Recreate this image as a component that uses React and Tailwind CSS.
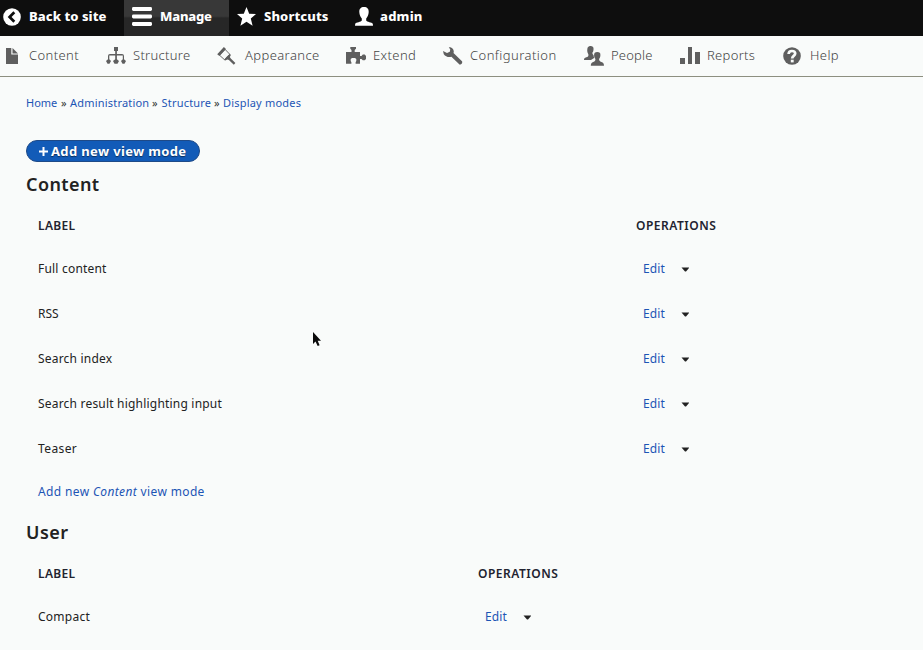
import React from "react";

function BackIcon() {
  return (
    <svg width="18" height="18" viewBox="0 0 18 18" className="block">
      <circle cx="9" cy="9" r="8.8" fill="#fff" />
      <path d="M11.3 4.300 6.600 9l4.700 4.700" fill="none" stroke="#0e0e0e" strokeWidth="2.700" />
    </svg>
  );
}
function MenuIcon() {
  return (
    <svg width="20" height="19" viewBox="0 0 20 19" className="block" fill="#fff">
      <rect width="20" height="4" rx="1.4" />
      <rect y="7.500" width="20" height="4" rx="1.4" />
      <rect y="15" width="20" height="4" rx="1.4" />
    </svg>
  );
}
function StarIcon() {
  return (
    <svg width="19" height="19" viewBox="0 0 19 19" className="block" fill="#fff">
      <path d="m9.5 0 2.7 6.7 6.8.4-5.2 4.5 1.8 7.1-6.1-4-6.1 4 1.8-7.1L0 7.1l6.8-.4z" />
    </svg>
  );
}
function UserIcon() {
  return (
    <svg width="18" height="19" viewBox="0 0 18 19" className="block" fill="#fff">
      <path d="M9 0c3.200 0 4.900 2 4.700 5.100-.1 2.800-1.200 5-2.500 6.300v2.100c.6 1.500 5.800 1.800 6.600 3.300l.2 1.900H0l.2-1.900c.8-1.500 6-1.800 6.600-3.300v-2.100C5.500 10.100 4.400 7.900 4.300 5.100 4.100 2 5.800 0 9 0z" />
    </svg>
  );
}
function FileIcon() {
  return (
    <svg width="12" height="16" viewBox="0 0 12 16" className="block" fill="#5f5f5f">
      <path d="M0 0h5.300v6.600H12V16H0z" />
      <path d="M6.500 0 12 5.400H6.500z" />
    </svg>
  );
}
function StructureIcon() {
  return (
    <svg width="20" height="17" viewBox="0 0 20 17" className="block" fill="#5f5f5f">
      <path d="M8 0h4v4h-1.100v3H16q2 0 2 2v3.300l2 1.700-1.500 2.800h-2L15 14l1.800-1.700V8.500h-5.900v3.800L13 14l-1.500 2.800h-3L7 14l2.200-1.700V8.500H3.300v3.800L5 14l-1.500 2.800h-2L0 14l2-1.700V9q0-2 2-2h5.200V4H8z" />
    </svg>
  );
}
function AppearanceIcon() {
  return (
    <svg width="19" height="18" viewBox="0 0 19 18" className="block">
      <path d="M8 2.300 12.800 7.300 7.600 12.800 2.500 8.200z" fill="none" stroke="#5f5f5f" strokeWidth=".9" />
      <path d="M6.900 0 9 2 2.500 9 .2 7.200zM12.900 6.800l.9 1.400-1 1.800 1 1.500 4.600 4.600-1.600 1.700-4.900-4.800-1.600-.4-2 .8-1.200-.7 2.600-3z" fill="#5f5f5f" />
    </svg>
  );
}
function ExtendIcon() {
  return (
    <svg width="20" height="17" viewBox="0 0 20 17" className="block" fill="#5f5f5f">
      <path d="M4.300 0h5.700v1.700L8.700 3v2H14v4h1.500l1.300-1.500h1.900L20 9v3l-1.300 1.300h-1.900L15.500 12H14v4.800H9.600v-1.500l.7-1.300v-2L9 11H6l-1.300 1v2l.7 1.300v1.500H0V5h5.500V3L4.300 1.700z" />
    </svg>
  );
}
function WrenchIcon() {
  return (
    <svg width="20" height="18" viewBox="0 0 20 18" className="block" fill="#5f5f5f">
      <path d="M5.800.2c2.800-.2 5.100 1.800 5 4.600l-.3 1.300 8.500 8.200c.9 1.500-.8 3.600-2.500 3.300l-8.100-7.900c-2.800 1-5.900-.1-7.600-2.500L0 4l4 2 2.800-1.200.5-2.300z" />
    </svg>
  );
}
function PeopleIcon() {
  return (
    <svg width="20" height="20" viewBox="0 0 20 20" className="block">
      <path d="M5.200.3C8-.5 9.900.8 9.500 3.500 9.400 5 9 6 8.300 6.800c.2 1.300.9 2.300 1.800 2.700v2.600L7 14.100H0c0-2 .5-2.200 2.300-2.900 1.700-.6 2.200-.8 2.100-2.700C3.800 7 3 6 3.300 3.500 3.400 1.700 4 .7 5.200.3z" fill="#5f5f5f" />
      <path d="M13.200 6c2.400 0 3.400 1.200 3.200 3.200-.1 1.800-.6 3-1.300 3.800 0 1.600.5 2.300 2.300 2.900 1.900.6 2.500 1.300 2.600 3.800H6.800c.1-2.500.7-3.200 2.400-3.800 1.900-.6 2.200-1.300 2.200-2.900-.8-.8-1.200-2-1.300-3.800C10 7.200 11.100 6 13.200 6z" fill="#5f5f5f" stroke="#f9fbfa" strokeWidth="1" paintOrder="stroke" />
    </svg>
  );
}
function ReportsIcon() {
  return (
    <svg width="20" height="17" viewBox="0 0 20 17" className="block" fill="#5f5f5f">
      <path d="M0 11h5v6H0zM8 0h4v17H8zM15 5h5v12h-5z" />
    </svg>
  );
}
function HelpIcon() {
  return (
    <svg width="18" height="18" viewBox="0 0 18 18" className="block">
      <circle cx="9" cy="9" r="8.800" fill="#5f5f5f" />
      <path d="M5.600 7C5.700 4.700 7 4 8.900 4c2 0 3.300.9 3.300 2.500 0 2.400-3 2.400-3 4.900" fill="none" stroke="#f9fbfa" strokeWidth="2.700" />
      <path d="M7.800 12.700h2.900v2.700H7.800z" fill="#f9fbfa" />
    </svg>
  );
}

const topItems = [
  { label: "Back to site", icon: BackIcon, box: "w-[124px] pl-[3px]", slot: "w-[26px]", text: "tracking-[0.05px]" },
  { label: "Manage", icon: MenuIcon, box: "w-[105px] pl-2 bg-linear-to-b from-[#383838] from-45% to-[#272727] to-50%", slot: "w-7", text: "tracking-[-0.2px]" },
  { label: "Shortcuts", icon: StarIcon, box: "w-[118px] pl-2", slot: "w-[27px]", text: "tracking-[0.1px]" },
  { label: "admin", icon: UserIcon, box: "w-[100px] pl-2", slot: "w-[25px]", text: "tracking-[0.2px]" },
];

const navItems = [
  { label: "Content", icon: FileIcon, box: "w-[100px] pl-1.5", slot: "w-[23px]", text: "tracking-[0.4px]" },
  { label: "Structure", icon: StructureIcon, box: "w-[112px] pl-1.5", slot: "w-[27px]", text: "tracking-[0.3px]" },
  { label: "Appearance", icon: AppearanceIcon, box: "w-[128px] pl-[5px]", slot: "w-7", text: "tracking-[0.4px]" },
  { label: "Extend", icon: ExtendIcon, box: "w-[97px] pl-1.5", slot: "w-[27px]", text: "tracking-[0.4px]" },
  { label: "Configuration", icon: WrenchIcon, box: "w-[141px] pl-1.5", slot: "w-[27px]", text: "tracking-[0.45px]" },
  { label: "People", icon: PeopleIcon, box: "w-[96px] pl-1.5", slot: "w-[27px]", text: "tracking-[0.2px]" },
  { label: "Reports", icon: ReportsIcon, box: "w-[103px] pl-1.5", slot: "w-[27px]", text: "tracking-[0.3px]" },
  { label: "Help", icon: HelpIcon, box: "w-[80px] pl-1.5", slot: "w-[27px]", text: "tracking-[0.4px]" },
];

const contentRows = [
  { label: "Full content", text: "tracking-[0.2px]" },
  { label: "RSS", text: "tracking-[0px]" },
  { label: "Search index", text: "tracking-[0.2px]" },
  { label: "Search result highlighting input", text: "tracking-[0.2px]" },
  { label: "Teaser", text: "tracking-[0.4px]" },
];
const userRows = [{ label: "Compact", text: "tracking-[0.25px]" }];

function ModeTable({ rows, labelWidth }) {
  return (
    <div>
      <div className="-mb-px flex h-[42px] items-center pl-3 text-[12px] font-semibold text-[#222330]">
        <div className={labelWidth}><span className="tracking-[0.35px]">LABEL</span></div>
        <div><span className="tracking-[0.5px]">OPERATIONS</span></div>
      </div>
      {rows.map((row) => (
        <div key={row.label} className="flex h-[45px] items-center pl-3">
          <div className={labelWidth}><span className={row.text}>{row.label}</span></div>
          <div className="flex items-center pl-[7px]">
            <a className="w-[38px] text-[#1d55b5]"><span className="tracking-[0.15px]">Edit</span></a>
            <svg width="8" height="5" viewBox="0 0 8 5" className="mt-px" fill="#222">
              <path d="M.5 .5h8L5 4.500H4z" />
            </svg>
          </div>
        </div>
      ))}
    </div>
  );
}

export default function App() {
  return (
    <div className="relative h-[650px] w-[923px] overflow-hidden bg-[#f9fbfa] font-['Noto_Sans','Open_Sans',sans-serif] text-[12px] leading-[18px] whitespace-nowrap text-[#222]">
      <header className="flex h-9 bg-[#0e0e0e] text-[13px] font-extrabold text-white">
        {topItems.map(({ label, icon: Icon, box, slot, text }) => (
          <a key={label} className={`flex shrink-0 items-center pb-[3px] ${box}`}>
            <span className={`shrink-0 ${slot}`}><Icon /></span>
            <span className={`pb-0.5 ${text}`}>{label}</span>
          </a>
        ))}
      </header>
      <nav className="flex h-[41px] border-b border-[#8d8f80] pb-px text-[13px] font-light text-[#444]">
        {navItems.map(({ label, icon: Icon, box, slot, text }) => (
          <a key={label} className={`flex shrink-0 items-center ${box}`}>
            <span className={`shrink-0 ${slot}`}><Icon /></span>
            <span className={`pb-0.5 ${text}`}>{label}</span>
          </a>
        ))}
      </nav>
      <main className="px-[26px] pt-[17px]">
        <div className="flex h-[18px] text-[11px] text-[#1d55b5]">
          <a className="w-[35px]"><span className="tracking-[0px]">Home</span></a>
          <span className="w-[9px] text-[#333]">»</span>
          <a className="w-[82px]"><span className="tracking-[0.2px]">Administration</span></a>
          <span className="w-[9.500px] text-[#333]">»</span>
          <a className="w-[52.500px]"><span className="tracking-[0.2px]">Structure</span></a>
          <span className="w-[9px] text-[#333]">»</span>
          <a><span className="tracking-[0.2px]">Display modes</span></a>
        </div>
        <a className="mt-7 flex h-[22px] w-[174px] items-center rounded-full border border-[#1e4a88] bg-[#125bb8] pl-[11px] text-[13px] font-bold text-white text-shadow-[0_1px_1px_rgba(0,0,0,0.5)]">
          <svg width="11" height="11" viewBox="0 0 11 11" className="mr-0.5 shrink-0">
            <path d="M5.500 1v9M1 5.500h9" stroke="#fff" strokeWidth="2" />
          </svg>
          <span className="tracking-[0.36px]">Add new view mode</span>
        </a>
        <h2 className="mt-2 h-7 text-[18px] leading-7 font-semibold"><span className="tracking-[0.4px]">Content</span></h2>
        <div className="mt-[7px]"><ModeTable rows={contentRows} labelWidth="w-[598px]" /></div>
        <a className="flex h-[41px] items-center pl-3 text-[#1d55b5]">
          <span className="tracking-[0.36px]">Add new <em>Content</em> view mode</span>
        </a>
        <h2 className="mt-1.5 h-7 text-[18px] leading-7 font-semibold"><span className="tracking-[0.5px]">User</span></h2>
        <div className="mt-[7px]"><ModeTable rows={userRows} labelWidth="w-[440px]" /></div>
      </main>
      <svg width="10" height="16" viewBox="0 0 10 16" className="absolute top-[331px] left-[312px]">
        <path d="M1 1v12l2.500-2.400L5.700 15l1.900-.8-1.900-4.400H9z" fill="#0b0b0b" />
      </svg>
    </div>
  );
}
